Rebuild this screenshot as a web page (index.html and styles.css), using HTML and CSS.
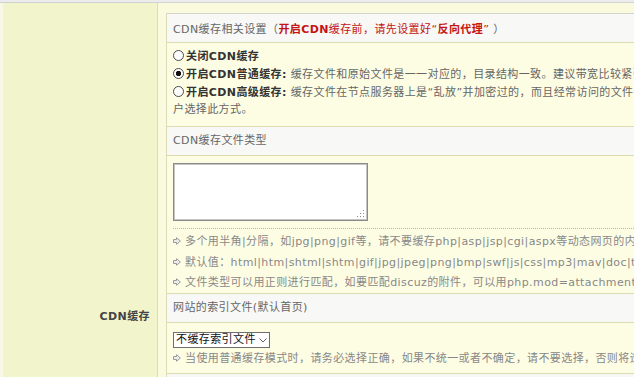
FILE: index.html
```html
<!DOCTYPE html>
<html lang="zh-CN">
<head>
<meta charset="utf-8">
<title>CDN缓存</title>
<link rel="stylesheet" href="styles.css">
</head>
<body>
<div class="topbar"></div>
<div class="layout">
  <div class="label-cell">CDN缓存</div>
  <div class="content-cell">
    <div class="card">
      <div class="card-head">CDN缓存相关设置<span class="sc">（</span><span class="warn"><b>开启CDN</b>缓存前<span class="tc">，</span>请先设置好“<b>反向代理</b>”</span> <span class="sc">）</span></div>
      <div class="card-body opts">
        <label class="opt"><input type="radio" class="radio" name="cdn"><b>关闭CDN缓存</b></label><br>
        <label class="opt"><input type="radio" class="radio" name="cdn" checked><b>开启CDN普通缓存:</b> 缓存文件和原始文件是一一对应的<span class="tc">，</span>目录结构一致。建议带宽比较紧张的用户选择此方式。</label><br>
        <label class="opt"><input type="radio" class="radio" name="cdn"><b>开启CDN高级缓存:</b> 缓存文件在节点服务器上是“乱放”并加密过的<span class="tc">，</span>而且经常访问的文件会被缓存在内存中<span class="tc">，</span>速度更快<span class="tc">，</span>建议带宽充裕的用<br>户选择此方式。</label>
      </div>
      <div class="card-head">CDN缓存文件类型</div>
      <div class="card-body files">
        <div class="textarea-wrap">
          <textarea class="textarea" aria-label="CDN缓存文件类型"></textarea>
          <svg class="grip" width="8" height="8" viewBox="0 0 8 8"><g fill="#8a8a8a"><rect x="6" y="0" width="1" height="1"/><rect x="3" y="3" width="1" height="1"/><rect x="6" y="3" width="1" height="1"/><rect x="0" y="6" width="1" height="1"/><rect x="3" y="6" width="1" height="1"/><rect x="6" y="6" width="1" height="1"/></g></svg>
        </div>
        <ul class="tips dotted">
          <li class="tip"><svg class="arrow" width="8" height="8" viewBox="0 0 8 8"><path d="M0.5 2.5H3.5V0.7L7.4 4L3.5 7.3V5.5H0.5Z" fill="#ececec" stroke="#9c9c9c" stroke-width="1"/></svg><span>多个用半角|分隔<span class="tc">，</span>如jpg|png|gif等<span class="tc">，</span>请不要缓存php|asp|jsp|cgi|aspx等动态网页的内容</span></li>
          <li class="tip"><svg class="arrow" width="8" height="8" viewBox="0 0 8 8"><path d="M0.5 2.5H3.5V0.7L7.4 4L3.5 7.3V5.5H0.5Z" fill="#ececec" stroke="#9c9c9c" stroke-width="1"/></svg><span>默认值<span class="tc">：</span>html|htm|shtml|shtm|gif|jpg|jpeg|png|bmp|swf|js|css|mp3|mav|doc|txt|rar|zip</span></li>
          <li class="tip"><svg class="arrow" width="8" height="8" viewBox="0 0 8 8"><path d="M0.5 2.5H3.5V0.7L7.4 4L3.5 7.3V5.5H0.5Z" fill="#ececec" stroke="#9c9c9c" stroke-width="1"/></svg><span>文件类型可以用正则进行匹配<span class="tc">，</span>如要匹配discuz的附件<span class="tc">，</span>可以用php.mod=attachment</span></li>
        </ul>
      </div>
      <div class="card-head">网站的索引文件(默认首页)</div>
      <div class="card-body index">
        <span class="select">不缓存索引文件<svg class="chev" width="8" height="5" viewBox="0 0 8 5"><path d="M0.5 0.5L4 4L7.5 0.5" fill="none" stroke="#666" stroke-width="1"/></svg></span>
        <ul class="tips">
          <li class="tip"><svg class="arrow" width="8" height="8" viewBox="0 0 8 8"><path d="M0.5 2.5H3.5V0.7L7.4 4L3.5 7.3V5.5H0.5Z" fill="#ececec" stroke="#9c9c9c" stroke-width="1"/></svg><span>当使用普通缓存模式时<span class="tc">，</span>请务必选择正确<span class="tc">，</span>如果不统一或者不确定<span class="tc">，</span>请不要选择<span class="tc">，</span>否则将造成首页无法访问</span></li>
        </ul>
      </div>
      <div class="card-head">缓存过期时间</div>
    </div>
  </div>
</div>
</body>
</html>
```
FILE: styles.css
```css
* { box-sizing: border-box; }
html, body { margin: 0; height: 100%; }
body {
  overflow: hidden;
  background: #fafadf;
  font: 11px "DejaVu Sans", "Noto Sans CJK SC", sans-serif;
  letter-spacing: 0.4px;
  color: #666;
}
.sc { font-family: "Noto Sans CJK SC", sans-serif; }
.tc { font-family: "Noto Sans CJK TC", sans-serif; }
.topbar {
  height: 3px;
  background: #ececec;
  border-bottom: 1px solid #d2d2d2;
}
.layout {
  display: flex;
  width: 1200px;
  min-height: 374px;
}
.label-cell {
  width: 158px;
  flex: none;
  background: #f2f4cc;
  border-left: 3px solid #f7f8e6;
  border-right: 1px solid #dcdeb0;
  padding: 306px 7px 0 0;
  text-align: right;
  font-weight: bold;
  color: #444;
  line-height: 16px;
}
.content-cell {
  flex: 1;
  padding: 10px 0 0 8px;
  background: #fafadf;
}
.card {
  border-top: 1px solid #d3d3cb;
  border-left: 1px solid #dadab6;
  background: #fdfde4;
}
.card-head {
  height: 29px;
  line-height: 28px;
  padding-left: 6px;
  background: #f8f8f6;
  border-bottom: 1px solid #dcdcb0;
  color: #666;
  white-space: nowrap;
}
.warn { color: #c41414; }
.warn b { font-weight: bold; }
.card-body {
  padding: 0 6px;
  border-bottom: 1px solid #dcdcb0;
  white-space: nowrap;
}
.opts {
  padding-top: 5px;
  padding-bottom: 8px;
  line-height: 17px;
}
.opt b { color: #333; }
.radio {
  -webkit-appearance: none;
  appearance: none;
  width: 11px;
  height: 11px;
  margin: 0 2px 0 0;
  border: 1px solid #4a4a4a;
  border-radius: 50%;
  background: #fff;
  vertical-align: -1px;
}
.radio:checked {
  background: radial-gradient(circle, #111 0 2.4px, #fff 3px);
}
.files { padding-top: 7px; padding-bottom: 0.5px; }
.textarea-wrap {
  position: relative;
  width: 195px;
  height: 58px;
}
.textarea {
  display: block;
  width: 195px;
  height: 58px;
  margin: 0;
  border: 1px solid #8a8a8a;
  box-shadow: inset 0 0 0 1px #c4c4c4;
  background: #fff;
  resize: none;
}
.grip {
  position: absolute;
  right: 3px;
  bottom: 3px;
}
.tips {
  list-style: none;
  margin: 0;
  padding: 0;
}
.tips.dotted {
  margin-top: 7px;
  padding-top: 2px;
  border-top: 1px dotted #b8b8b8;
}
.tip {
  display: flex;
  align-items: center;
  gap: 4px;
  height: 20.5px;
  line-height: 20.5px;
  color: #888;
}
.arrow { flex: none; }
.index { padding-top: 9px; padding-bottom: 4px; }
.select {
  display: flex;
  align-items: center;
  gap: 3px;
  width: 97px;
  height: 16px;
  padding: 0 2px;
  border: 1px solid #6e6e6e;
  background: #fff;
  color: #111;
  line-height: 14px;
}
.chev { flex: none; }
```
